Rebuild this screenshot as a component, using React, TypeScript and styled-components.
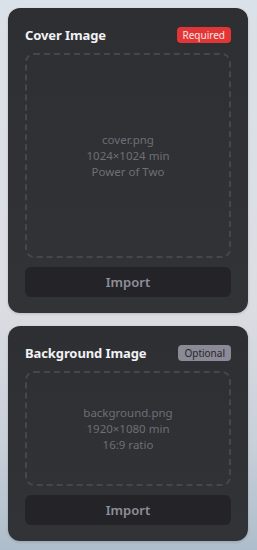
import { createGlobalStyle, styled } from "styled-components";

const GlobalStyle = createGlobalStyle`
    html, body {
        margin: 0;
        padding: 0;
    }
    body {
        min-height: 550px;
        background: linear-gradient(180deg, #dbe1e8 0%, #dcdde3 55%, #c9d0d9 80%, #aebdcb 100%);
        font-family: "Noto Sans", "Open Sans", sans-serif;
    }
`;

const Page = styled.div`
    display: flex;
    flex-direction: column;
    gap: 13px;
    padding: 8px 9px 8px 8px;
`;

const Card = styled.section`
    background: linear-gradient(180deg, #2e2f33 0%, #323336 100%);
    border-radius: 12px;
    padding: 19px 17px 16px;
    display: flex;
    flex-direction: column;
    box-shadow: 0 1px 3px rgba(0, 0, 0, 0.15);
`;

const Header = styled.div`
    display: flex;
    align-items: center;
    justify-content: space-between;
    height: 16px;
`;

const Title = styled.h2`
    margin: 0;
    font-size: 13px;
    font-weight: 700;
    color: #f2f2f4;
    letter-spacing: -0.1px;
`;

const Badge = styled.span<{ $tone: "red" | "gray" }>`
    height: 16px;
    line-height: 16px;
    padding: 0 6px;
    border-radius: 4px;
    font-size: 10px;
    background: ${(p) => (p.$tone === "red" ? "#e23636" : "#8b8a96")};
    color: ${(p) => (p.$tone === "red" ? "#fbe3e3" : "#27272b")};
`;

const DropZone = styled.div<{ $height: number }>`
    margin-top: 10px;
    height: ${(p) => p.$height}px;
    box-sizing: border-box;
    border: 2px dashed #46474c;
    border-radius: 9px;
    display: flex;
    flex-direction: column;
    align-items: center;
    justify-content: center;
    font-size: 11.5px;
    line-height: 16px;
    color: #6d6f75;
`;

const ImportButton = styled.button`
    margin-top: 9px;
    height: 30px;
    border: none;
    border-radius: 6px;
    background: #242428;
    color: #8f8f9b;
    font-family: inherit;
    font-size: 13px;
    font-weight: 600;
`;

type Slot = {
    title: string;
    badge: string;
    tone: "red" | "gray";
    file: string;
    size: string;
    rule: string;
    height: number;
};

const slots: Slot[] = [
    { title: "Cover Image", badge: "Required", tone: "red", file: "cover.png", size: "1024×1024 min", rule: "Power of Two", height: 205 },
    { title: "Background Image", badge: "Optional", tone: "gray", file: "background.png", size: "1920×1080 min", rule: "16:9 ratio", height: 115 },
];

export default function App() {
    return (
        <>
            <GlobalStyle />
            <Page>
                {slots.map((s) => (
                    <Card key={s.title}>
                        <Header>
                            <Title>{s.title}</Title>
                            <Badge $tone={s.tone}>{s.badge}</Badge>
                        </Header>
                        <DropZone $height={s.height}>
                            <span>{s.file}</span>
                            <span>{s.size}</span>
                            <span>{s.rule}</span>
                        </DropZone>
                        <ImportButton>Import</ImportButton>
                    </Card>
                ))}
            </Page>
        </>
    );
}
